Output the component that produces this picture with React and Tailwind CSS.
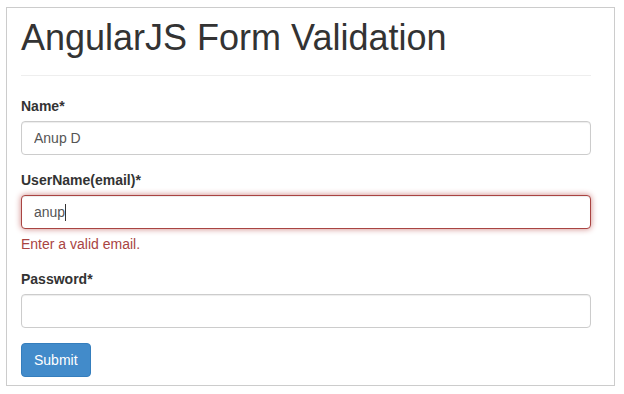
import React from 'react'

const inputCls =
  'block w-full h-[34px] px-3 text-[14px] leading-5 text-[#555] bg-white border border-[#ccc] rounded-[4px] shadow-[inset_0_1px_1px_rgba(0,0,0,0.075)] outline-none'

function Field({ label, children }) {
  return (
    <div className="mb-[15px]">
      <label className="block mb-[5px] text-[14px] leading-5 font-bold text-[#333]">{label}</label>
      {children}
    </div>
  )
}

export default function App() {
  return (
    <div className="w-[624px] h-[394px] bg-white pt-[7px] pl-[6px]" style={{ fontFamily: '"Liberation Sans", Arial, sans-serif' }}>
      <div className="w-[609px] h-[379px] border border-[#ccc] pl-[14px] pt-[10px]">
        <div className="w-[570px]">
          {/* Header */}
          <h1 className="text-[36px] leading-10 font-normal text-[#333] pb-[17px] border-b border-[#eee] mb-5">
            AngularJS Form Validation
          </h1>

          <form onSubmit={(e) => e.preventDefault()}>
            <Field label="Name*">
              <input className={inputCls} defaultValue="Anup D" readOnly />
            </Field>

            <Field label="UserName(email)*">
              <div className="flex items-center w-full h-[34px] px-3 text-[14px] leading-5 text-[#555] bg-white border border-[#a94442] rounded-[4px] shadow-[inset_0_1px_1px_rgba(0,0,0,0.075),0_0_6px_#ce8483]">
                <span>anup</span>
                <span className="inline-block w-px h-[17px] bg-[#333]" />
              </div>
              <div className="mt-[5px] text-[14px] leading-5 text-[#a94442]">Enter a valid email.</div>
            </Field>

            <Field label="Password*">
              <input type="password" className={inputCls} readOnly />
            </Field>

            <button
              type="submit"
              className="h-[34px] px-3 text-[14px] leading-5 text-white bg-[#428bca] border border-[#357ebd] rounded-[4px]"
            >
              Submit
            </button>
          </form>
        </div>
      </div>
    </div>
  )
}
